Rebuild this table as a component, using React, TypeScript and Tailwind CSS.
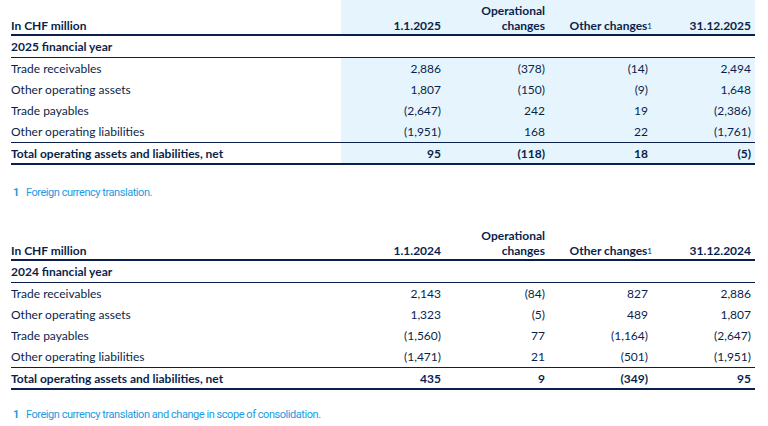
import React from "react";

type Row = { label: string; v: string[]; bold?: boolean };

const navy = "text-[#0b1f4b]";

function Table({
  year,
  start,
  end,
  rows,
  total,
  highlight,
}: {
  year: string;
  start: string;
  end: string;
  rows: Row[];
  total: Row;
  highlight: boolean;
}) {
  const hl = highlight ? "bg-[#e6f5fd]" : "";
  const cols = "grid grid-cols-[330px_104px_104px_103px_103px]";
  return (
    <div className={`w-[744px] ${navy}`}>
      {/* header */}
      <div className={`${cols} border-b-2 border-[#0b1f4b] h-[36px]`}>
        <div className="flex items-end pb-[1px] font-bold">In CHF million</div>
        <div className={`${hl} col-span-4 grid grid-cols-[104px_104px_103px_103px] font-bold`}>
          <div className="flex items-end justify-end pr-[4px] pb-[1px]">{start}</div>
          <div className="flex flex-col items-end justify-end pr-[4px] pb-[1px] leading-[15px]">
            <span>Operational</span>
            <span>changes</span>
          </div>
          <div className="flex items-end justify-end pr-[0px] pb-[1px] font-bold">
            <span>
              Other changes<sup className="text-[8px] font-normal relative -top-[1px]">1</sup>
            </span>
          </div>
          <div className="flex items-end justify-end pr-[4px] pb-[1px]">{end}</div>
        </div>
      </div>
      {/* year row */}
      <div className={`${cols} border-b border-[#0b1f4b] h-[22px] items-center`}>
        <div className="font-bold">{year} financial year</div>
      </div>
      {rows.map((r, i) => (
        <div key={i} className={`${cols} h-[21px] ${i === rows.length - 1 ? "h-[22px] border-b border-[#0b1f4b]" : ""}`}>
          <div className="flex items-center">{r.label}</div>
          {r.v.map((v, j) => (
            <div key={j} className={`${hl} flex items-center justify-end pr-[4px]`}>
              {v}
            </div>
          ))}
        </div>
      ))}
      <div className={`${cols} h-[22px] border-b-2 border-[#0b1f4b] font-bold`}>
        <div className="flex items-center">{total.label}</div>
        {total.v.map((v, j) => (
          <div key={j} className={`${hl} flex items-center justify-end pr-[4px]`}>
            {v}
          </div>
        ))}
      </div>
    </div>
  );
}

export default function App() {
  return (
    <div
      className="w-[768px] h-[426px] bg-white pl-[11px] text-[12px] leading-[15px] overflow-hidden"
      style={{ fontFamily: "Lato, 'Noto Sans', sans-serif" }}
    >
      <Table
        year="2025"
        start="1.1.2025"
        end="31.12.2025"
        highlight
        rows={[
          { label: "Trade receivables", v: ["2,886", "(378)", "(14)", "2,494"] },
          { label: "Other operating assets", v: ["1,807", "(150)", "(9)", "1,648"] },
          { label: "Trade payables", v: ["(2,647)", "242", "19", "(2,386)"] },
          { label: "Other operating liabilities", v: ["(1,951)", "168", "22", "(1,761)"] },
        ]}
        total={{ label: "Total operating assets and liabilities, net", v: ["95", "(118)", "18", "(5)"] }}
      />
      <div
        className="flex gap-[7px] mt-[20px] pl-[2px] text-[#1a9be3] text-[11px] tracking-[-0.45px]"
        style={{ fontFamily: "Roboto, sans-serif" }}
      >
        <span className="font-bold">1</span>
        <span>Foreign currency translation.</span>
      </div>
      <div className="mt-[25px]">
        <Table
          year="2024"
          start="1.1.2024"
          end="31.12.2024"
          highlight={false}
          rows={[
            { label: "Trade receivables", v: ["2,143", "(84)", "827", "2,886"] },
            { label: "Other operating assets", v: ["1,323", "(5)", "489", "1,807"] },
            { label: "Trade payables", v: ["(1,560)", "77", "(1,164)", "(2,647)"] },
            { label: "Other operating liabilities", v: ["(1,471)", "21", "(501)", "(1,951)"] },
          ]}
          total={{ label: "Total operating assets and liabilities, net", v: ["435", "9", "(349)", "95"] }}
        />
      </div>
      <div
        className="flex gap-[7px] mt-[17px] pl-[2px] text-[#1a9be3] text-[11px] tracking-[-0.45px]"
        style={{ fontFamily: "Roboto, sans-serif" }}
      >
        <span className="font-bold">1</span>
        <span>Foreign currency translation and change in scope of consolidation.</span>
      </div>
    </div>
  );
}
